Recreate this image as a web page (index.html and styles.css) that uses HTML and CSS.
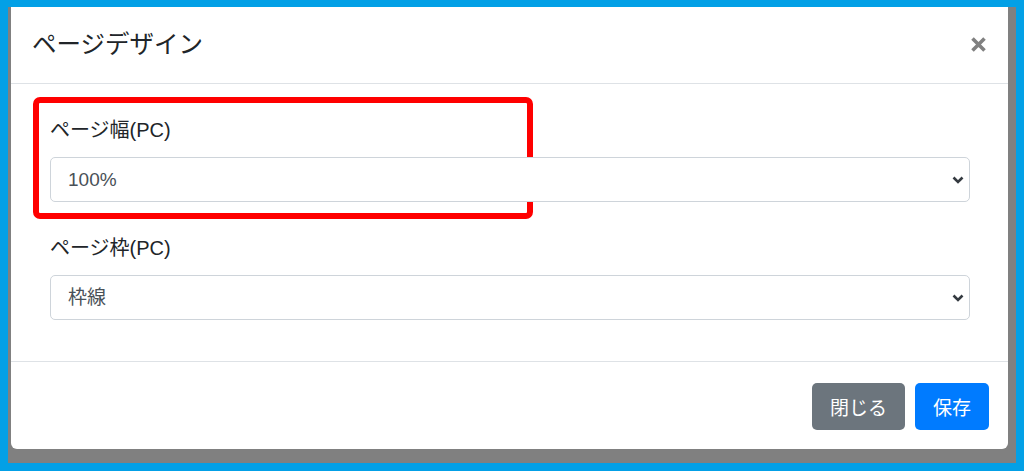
FILE: index.html
```html
<!DOCTYPE html>
<html lang="ja">
<head>
  <meta charset="UTF-8">
  <title>ページデザイン</title>
  <link rel="stylesheet" href="styles.css">
</head>
<body>

<div class="frame">
  <div class="modal">

    <div class="modal-header">
      <h5 class="modal-title">ページデザイン</h5>
      <button class="close" type="button">
        <svg width="17" height="17" viewBox="0 0 17 17">
          <path d="M2.5 2.5 L14.5 14.5 M14.5 2.5 L2.5 14.5" stroke="#808080" stroke-width="3.6" stroke-linecap="butt" fill="none"/>
        </svg>
      </button>
    </div>

    <div class="modal-body">
      <!-- 注目枠 -->
      <div class="highlight"></div>

      <div class="form-group">
        <label>ページ幅(PC)</label>
        <div class="select-wrap">
          <select class="form-control">
            <option>100%</option>
          </select>
          <svg class="chevron" width="12" height="8" viewBox="0 0 12 8">
            <path d="M1.5 1.5 L6 6 L10.5 1.5" stroke="#343a40" stroke-width="2.6" fill="none"/>
          </svg>
        </div>
      </div>

      <div class="form-group">
        <label>ページ枠(PC)</label>
        <div class="select-wrap">
          <select class="form-control">
            <option>枠線</option>
          </select>
          <svg class="chevron" width="12" height="8" viewBox="0 0 12 8">
            <path d="M1.5 1.5 L6 6 L10.5 1.5" stroke="#343a40" stroke-width="2.6" fill="none"/>
          </svg>
        </div>
      </div>
    </div>

    <div class="modal-footer">
      <button class="btn btn-secondary" type="button">閉じる</button>
      <button class="btn btn-primary" type="button">保存</button>
    </div>

  </div>
</div>

</body>
</html>
```

FILE: styles.css
```css
* { box-sizing: border-box; }
body {
  margin: 0;
  height: 471px;
  padding: 7px 8px 8px 8px;
  background-color: #03a0e6;
  font-family: "Liberation Sans", "Noto Sans CJK JP", sans-serif;
  color: #212529;
}
.frame {
  height: 456px;
  padding: 0 8px 14px 3px;
  background-color: #808080;
}
.modal {
  height: 442px;
  display: flex;
  flex-direction: column;
  background-color: #fff;
  border-radius: 0 0 6px 6px;
}
.modal-header {
  height: 77px;
  padding: 0 21px 0 21px;
  display: flex;
  align-items: center;
  justify-content: space-between;
  border-bottom: 1px solid #dee2e6;
}
.modal-title {
  margin: 0;
  font-size: 24.5px;
  font-weight: 400;
  line-height: 1.5;
}
.close {
  padding: 0;
  margin: 0;
  border: none;
  background: none;
  display: flex;
  margin-top: -2px;
}
.modal-body {
  position: relative;
  padding: 32px 38px 41px 39px;
  border-bottom: 1px solid #dee2e6;
}
.highlight {
  position: absolute;
  left: 22px;
  top: 13px;
  width: 500px;
  height: 122px;
  border: 6px solid #ff0000;
  border-radius: 7px;
}
.form-group {
  margin-bottom: 32px;
}
.form-group:last-child {
  margin-bottom: 0;
}
label {
  display: block;
  font-size: 20px;
  line-height: 29px;
  margin-bottom: 12px;
}
.select-wrap {
  position: relative;
}
.form-control {
  display: block;
  width: 100%;
  height: 45px;
  padding: 0 17px;
  font-family: inherit;
  font-size: 19px;
  color: #495057;
  background-color: #fff;
  border: 1px solid #ced4da;
  border-radius: 5px;
  appearance: none;
  -webkit-appearance: none;
}
.chevron {
  position: absolute;
  right: 6px;
  top: 19px;
}
.modal-footer {
  flex: 1;
  padding: 21px 19px 19px;
  display: flex;
  justify-content: flex-end;
  gap: 10px;
}
.btn {
  height: 47px;
  padding: 0 18px;
  font-family: inherit;
  font-size: 19px;
  color: #fff;
  border: none;
  border-radius: 5px;
}
.btn-secondary {
  background-color: #6c757d;
}
.btn-primary {
  background-color: #007bff;
}
```
